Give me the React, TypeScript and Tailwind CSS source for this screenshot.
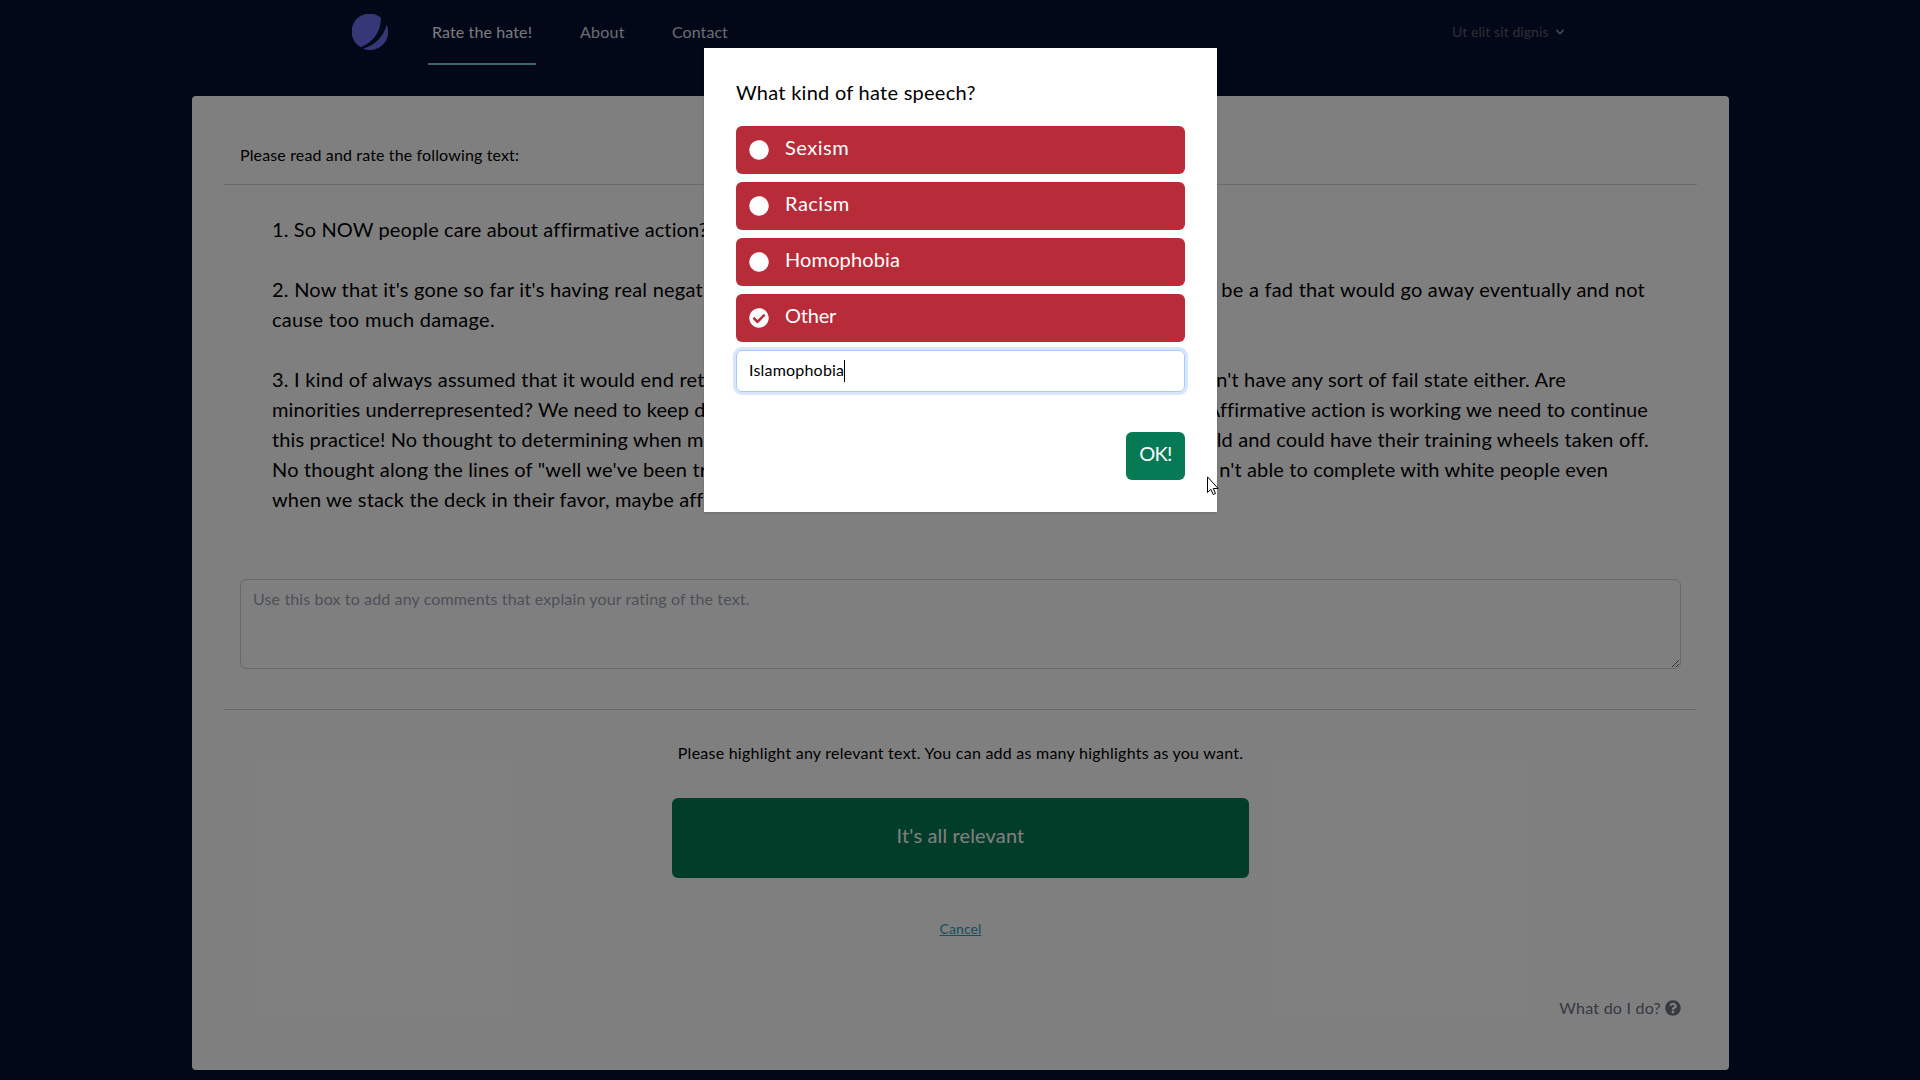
import React from 'react';
import { FaCheckCircle, FaCircle, FaQuestionCircle } from 'react-icons/fa';

type Line = { left?: string; leftClass?: string; right?: string; rightClass?: string };

const lines: Line[] = [
  { left: '1. So NOW people care about affirmative action?', leftClass: 'tracking-[0.12px]' },
  {},
  {
    left: "2. Now that it's gone so far it's having real negative",
    leftClass: 'tracking-[0.23px]',
    right: 'be a fad that would go away eventually and not',
    rightClass: 'tracking-[0.24px] pr-[4px]',
  },
  { left: 'cause too much damage.', leftClass: 'tracking-[0.3px]' },
  {},
  {
    left: '3. I kind of always assumed that it would end ret',
    leftClass: 'tracking-[0.22px]',
    right: "n't have any sort of fail state either. Are",
    rightClass: 'tracking-[0.16px] pr-[83px]',
  },
  {
    left: 'minorities underrepresented? We need to keep do',
    leftClass: 'tracking-[0.12px]',
    right: 'Affirmative action is working we need to continue',
    rightClass: 'tracking-[0.11px] pr-[1px]',
  },
  {
    left: 'this practice! No thought to determining when mi',
    leftClass: 'tracking-[0.1px]',
    right: 'ld and could have their training wheels taken off.',
    rightClass: 'tracking-[0.16px]',
  },
  {
    left: 'No thought along the lines of "well we\'ve been try',
    leftClass: 'tracking-[0.17px]',
    right: "n't able to complete with white people even",
    rightClass: 'tracking-[0.13px] pr-[41px]',
  },
  { left: 'when we stack the deck in their favor, maybe aff', leftClass: 'tracking-[0.16px]' },
];

const options = [
  { label: 'Sexism', checked: false, cls: 'tracking-[0.5px]' },
  { label: 'Racism', checked: false, cls: 'tracking-[0.5px]' },
  { label: 'Homophobia', checked: false, cls: 'tracking-[0.13px]' },
  { label: 'Other', checked: true, cls: 'tracking-[-0.2px]' },
];

function Logo() {
  return (
    <svg viewBox="0 0 36 36" className="size-9 shrink-0 fill-[#6c6eef]">
      <path d="M28.9 3.6A18 18 0 1 0 8.8 33.3C20 28.3 28.6 19 28.7 6Z" />
      <path d="M34.7 11A18 18 0 0 1 11 34.6C22 32 31.5 23 34.7 11Z" />
    </svg>
  );
}

function Header() {
  return (
    <header className="flex h-[65px] justify-between pr-[352px] pl-[352px] text-base">
      <div className="flex">
        <div className="flex h-16 items-center">
          <Logo />
        </div>
        <nav className="ml-10 flex gap-10 text-[#d5d9e0]">
          <a className="flex w-[108px] items-center border-b-2 border-[#75c8e0] pl-1 tracking-[0.12px] whitespace-nowrap text-gray-100">
            Rate the hate!
          </a>
          <a className="flex w-[52px] items-center border-b-2 border-transparent pl-1 tracking-[0.24px]">About</a>
          <a className="flex items-center border-b-2 border-transparent pl-1 tracking-[0.06px]">Contact</a>
        </nav>
      </div>
      <div className="flex h-16 w-[116px] items-center text-sm tracking-[0.08px] whitespace-nowrap text-[#5c616b]">
        <span className="w-[101px]">Ut elit sit dignis</span>
        <svg viewBox="0 0 20 20" className="size-4 shrink-0 fill-[#8b92a0]">
          <path d="M5.293 7.293a1 1 0 011.414 0L10 10.586l3.293-3.293a1 1 0 111.414 1.414l-4 4a1 1 0 01-1.414 0l-4-4a1 1 0 010-1.414z" />
        </svg>
      </div>
    </header>
  );
}

function RatingCard() {
  return (
    <main className="mt-[31px] ml-48 flex h-[974px] w-[1537px] flex-col rounded bg-white px-8 pt-[47px] text-black">
      <h1 className="pb-[17px] pl-4 text-base leading-6 tracking-[0.14px]">Please read and rate the following text:</h1>
      <hr className="border-gray-300" />
      <div className="mt-[29px] px-12 text-xl leading-[30px]">
        {lines.map((line, i) => (
          <div key={i} className="flex h-[30px] justify-between whitespace-nowrap">
            <span className={line.leftClass}>{line.left}</span>
            <span className={line.rightClass}>{line.right}</span>
          </div>
        ))}
      </div>
      <div className="mt-[65px] px-4">
        <textarea
          placeholder="Use this box to add any comments that explain your rating of the text."
          className="block h-[90px] w-full rounded-md border border-gray-300 px-3 py-[7px] text-base tracking-[0.13px] placeholder:text-gray-400"
        />
      </div>
      <hr className="mt-10 border-gray-300" />
      <p className="mt-[31px] text-center text-base leading-6 tracking-[0.24px]">
        Please highlight any relevant text. You can add as many highlights as you want.
      </p>
      <button className="mx-auto mt-[33px] h-20 w-[577px] rounded-md bg-[#057a55] pb-[6px] text-xl tracking-[0.14px] text-white">
        It's all relevant
      </button>
      <a className="mt-[41px] text-center text-sm tracking-[0.1px] text-[#2e9fc0] underline">Cancel</a>
      <div className="mt-[57px] flex items-center justify-end gap-1 pr-4 text-base leading-6 tracking-[0.24px] text-gray-500">
        What do I do?
        <FaQuestionCircle className="size-4" />
      </div>
    </main>
  );
}

function HateSpeechDialog() {
  return (
    <div className="absolute top-12 left-[704px] h-[464px] w-[513px] bg-white px-8 pt-[29px] text-xl text-black shadow-sm">
      <h2 className="leading-[30px] tracking-[0.26px]">What kind of hate speech?</h2>
      <div className="mt-[19px] flex flex-col gap-2 text-white">
        {options.map((o) => (
          <div key={o.label} className="flex h-12 items-center gap-4 rounded-md bg-[#b82c3a] pl-[13px]">
            {o.checked ? <FaCheckCircle className="size-5" /> : <FaCircle className="size-5" />}
            <span className={`pb-[6px] ${o.cls}`}>{o.label}</span>
          </div>
        ))}
        <div className="flex h-[42px] items-center rounded-md border border-[#a4cafe] pl-3 text-base tracking-[0.2px] text-black ring-[3px] ring-[#d7e6fd]">
          <span className="pb-[2px]">Islamophobia</span>
          <span className="h-[22px] w-px bg-black" />
        </div>
      </div>
      <div className="mt-10 flex justify-end">
        <button className="h-12 w-[59px] rounded-md bg-[#057a55] pb-[6px] tracking-[-0.7px] text-white">OK!</button>
      </div>
    </div>
  );
}

export default function App() {
  return (
    <div className="relative h-screen overflow-hidden bg-[#04102f] font-['Lato',sans-serif]">
      <Header />
      <RatingCard />
      <div className="absolute inset-0 bg-black/50" />
      <HateSpeechDialog />
      <svg viewBox="0 0 12 19" className="absolute top-[476px] left-[1207px] h-[19px] w-3">
        <path
          d="M.5.9v15.6l3.4-3.2 2.3 5.2 2.3-1-2.2-5h4.9z"
          fill="white"
          stroke="black"
          strokeWidth="1"
        />
      </svg>
    </div>
  );
}
